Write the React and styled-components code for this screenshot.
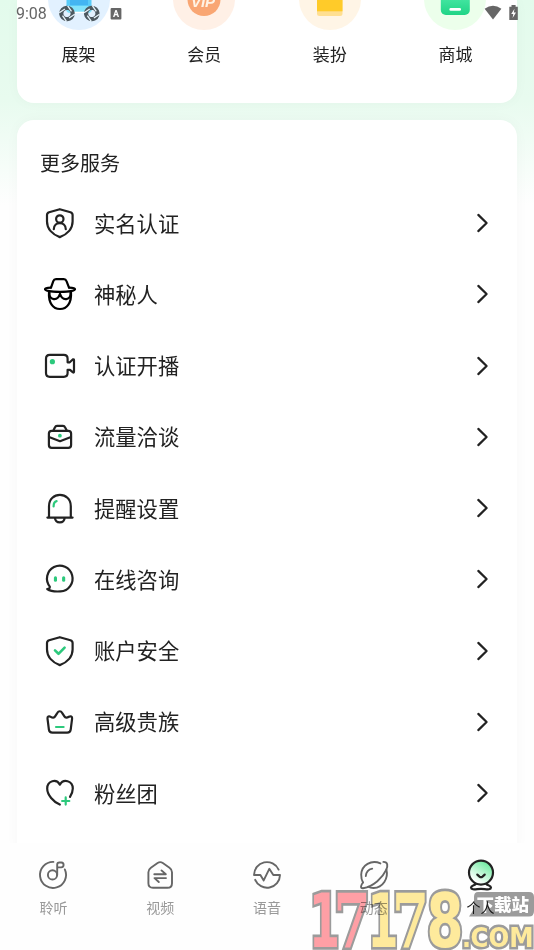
import React from 'react';
import styled, { createGlobalStyle } from 'styled-components';

const GREEN = '#2cc97c';

const GlobalStyle = createGlobalStyle`
	* {
		box-sizing: border-box;
	}

	body {
		margin: 0;
		font-family: 'Noto Sans CJK SC', 'Noto Sans', sans-serif;
		color: #222;
	}
`;

const Page = styled.div`
	position: relative;
	display: flex;
	flex-direction: column;
	width: 534px;
	height: 950px;
	overflow: hidden;
	background: linear-gradient(180deg, #e3fbec 0, #e8fbef 100px, #fefefe 205px);
`;

const StatusBar = styled.header`
	position: absolute;
	top: 0;
	left: 0;
	z-index: 2;
	display: flex;
	align-items: center;
	width: 100%;
	height: 27px;
	padding: 0 16px;
	font: 400 16px/28px Roboto, sans-serif;
	color: #666;
`;

const StatusIcons = styled.svg`
	margin-left: ${({ $gap }) => $gap};
`;

const Card = styled.section`
	flex: none;
	margin: 0 17px;
	background: #fff;
	box-shadow: 0 0 14px rgba(0, 0, 0, 0.03);
`;

const ShortcutCard = styled(Card)`
	display: grid;
	grid-template-columns: repeat(4, 125.6px);
	justify-content: center;
	height: 103px;
	border-radius: 0 0 17px 17px;
`;

const Shortcut = styled.div`
	display: flex;
	flex-direction: column;
	align-items: center;
	margin-top: -32px;
	font-size: 17px;
	line-height: 24px;

	svg {
		margin-bottom: 12px;
	}
`;

const ServiceCard = styled(Card)`
	height: 740px;
	margin-top: 17px;
	padding: 28px 23px 0;
	border-radius: 17px;
`;

const Title = styled.h2`
	margin: 0 0 10.4px;
	font-size: 20px;
	font-weight: 400;
	line-height: 29px;
`;

const ServiceRow = styled.div`
	display: flex;
	align-items: center;
	height: 71.25px;
	padding: 0 5px 0 2px;
`;

const ServiceLabel = styled.span`
	flex: 1;
	margin: -1px 0 0 16px;
	font-size: 21.3px;
	line-height: 30px;
`;

const RowIcon = styled.svg`
	fill: none;
	stroke: #222;
	stroke-width: 2.2;
	stroke-linecap: round;
	stroke-linejoin: round;
`;

const TabBar = styled.nav`
	position: absolute;
	left: 0;
	bottom: 0;
	display: grid;
	grid-template-columns: repeat(5, 1fr);
	width: 100%;
	height: 107px;
	padding-top: 16px;
	background: #fefefe;
`;

const Tab = styled.div`
	display: flex;
	flex-direction: column;
	align-items: center;
	font-size: 14px;
	line-height: 20px;
	color: ${({ $active }) => ($active ? '#222' : '#999')};

	svg {
		margin-bottom: 6px;
		fill: none;
		stroke: ${({ $active }) => ($active ? '#222' : '#666')};
		stroke-width: ${({ $active }) => ($active ? 2.2 : 1.9)};
		stroke-linecap: round;
		stroke-linejoin: round;
	}
`;

const Watermark = styled.svg`
	position: absolute;
	right: 0;
	bottom: 0;
	z-index: 3;
	mix-blend-mode: multiply;
`;

const SHIELD =
	'M17.8 4.2L28.5 7.3Q30.6 8 30.6 10V16.5C30.6 24 25 29.5 17.8 32.1C10.6 29.5 5 24 5 16.5V10Q5 8 7.1 7.3Z';

const services = [
	{
		label: '实名认证',
		icon: (
			<>
				<path d={SHIELD} />
				<circle cx="17.8" cy="14" r="3.7" />
				<path d="M11.8 24.2C12 16 23.6 16 23.8 24.2" />
			</>
		),
	},
	{
		label: '神秘人',
		icon: (
			<g stroke="#000">
				<path d="M9 11.6L11.3 5.2Q12 3.2 14 3.2H21.8Q23.8 3.2 24.5 5.2L27 11.6" />
				<path d="M9 11.6C5.5 11.6 3 12 3 13.2C3 14.8 9 15.8 18 15.8S33 14.8 33 13.2C33 12 30.5 11.6 27 11.6" />
				<path d="M7 16C6.3 27 11 33 18 33S29.7 27 29 16" />
				<path d="M7.4 16.4C7 24.6 15.6 25.6 18 17.8C20.4 25.6 29 24.6 28.6 16.4" />
			</g>
		),
	},
	{
		label: '认证开播',
		icon: (
			<>
				<path d="M7.8 6.9H21.8Q25.6 6.9 25.6 10.7V14.3H27.8L31 11.3Q32 11 32 12.2V23.6Q32 25 31 24.4L28 21.8H25.6V25Q25.6 28.8 21.8 28.8H7.8Q4 28.8 4 25V10.7Q4 6.9 7.8 6.9Z" />
				<circle cx="10.4" cy="13.7" r="2.6" fill={GREEN} stroke="none" />
			</>
		),
	},
	{
		label: '流量洽谈',
		icon: (
			<>
				<rect x="6.9" y="11.8" width="22.2" height="17" rx="2.8" />
				<path d="M11.4 11.5L13 8.2Q13.6 6.8 15 6.8H21Q22.4 6.8 23 8.2L24.8 11.5M7 18L18 22.2L29 18" />
				<circle cx="17.9" cy="16.7" r="1.9" fill={GREEN} stroke="none" />
			</>
		),
	},
	{
		label: '提醒设置',
		icon: (
			<>
				<path d="M5.4 27.6H30.6M7 27.4V16.2C7 1.2 28.8 1.2 28.8 16.2V27.4M12.9 27.8C13.5 33.8 22.1 33.8 22.7 27.8" />
				<path d="M11.6 16.4Q11.6 11.8 14.6 11.2" stroke={GREEN} />
			</>
		),
	},
	{
		label: '在线咨询',
		icon: (
			<>
				<path d="M7.8 25.6A12.8 12.9 0 1 1 18.5 30.4C13 30.8 8 30 5.2 28C7 27.9 8 27.2 7.8 25.6Z" />
				<g fill={GREEN} stroke="none">
					<rect x="11.9" y="15.3" width="3.1" height="5.4" rx="1.5" />
					<rect x="20.1" y="15.3" width="3.1" height="5.4" rx="1.5" />
				</g>
			</>
		),
	},
	{
		label: '账户安全',
		icon: (
			<>
				<path d={SHIELD} />
				<path d="M13 17.4L16.5 20.8L22.6 14.6" stroke={GREEN} strokeWidth="2.6" />
			</>
		),
	},
	{
		label: '高级贵族',
		icon: (
			<>
				<path d="M5.5 14.6C5.2 12.5 7 11.7 8.7 12.8C10.5 14 12.2 14 13.1 12.4L15.4 8.8C16.6 6.7 18.9 6.7 20.1 8.8L22.4 12.4C23.3 14 25 14 26.9 12.8C28.6 11.7 30.4 12.5 30.1 14.6L28.7 25.6Q28.3 28.7 25.2 28.7H10.4Q7.3 28.7 6.9 25.6Z" />
				<path d="M14 23H21.6" stroke={GREEN} />
			</>
		),
	},
	{
		label: '粉丝团',
		icon: (
			<>
				<path d="M17.8 29.6C11.5 27 5.2 20 5.2 13.6C5.2 5.4 14.5 3.4 17.9 9.6C21.3 3.4 30.8 5.4 30.8 13.6C30.8 16.6 29.6 19.4 28 21.8" />
				<path d="M20.1 26H27.3M23.7 22.4V29.6" stroke={GREEN} />
			</>
		),
	},
];

const shortcuts = [
	{
		label: '展架',
		tint: '#e2f1ff',
		icon: (
			<>
				<rect x="18.5" y="10" width="25" height="34.5" rx="3" fill="#59cbf8" />
				<rect x="22" y="10" width="18" height="27" fill="#43b5f2" />
				<rect x="18.5" y="38" width="25" height="6.5" rx="2" fill="#83e3fb" />
				<path d="M26 44.4H37" stroke="#fff" strokeWidth="1.4" />
			</>
		),
	},
	{
		label: '会员',
		tint: '#fff0e6',
		icon: (
			<>
				<circle cx="31" cy="31.5" r="16.5" fill="#f9a673" />
				<text
					x="30"
					y="38.5"
					fill="#fff3e4"
					fontFamily="Liberation Sans, sans-serif"
					fontSize="15"
					fontWeight="700"
					fontStyle="italic"
					textAnchor="middle"
				>
					VIP
				</text>
			</>
		),
	},
	{
		label: '装扮',
		tint: '#fff5e6',
		icon: (
			<>
				<rect x="18" y="14" width="25.5" height="34" rx="2.5" fill="#ffdf92" />
				<rect x="18" y="14" width="25.5" height="29.3" fill="#ffcb29" />
			</>
		),
	},
	{
		label: '商城',
		tint: '#ecffeb',
		icon: (
			<>
				<defs>
					<linearGradient id="mall" x1="0" y1="0" x2="0" y2="1">
						<stop offset="0.5" stopColor="#42e5a0" />
						<stop offset="1" stopColor="#20d486" />
					</linearGradient>
				</defs>
				<rect x="16.8" y="15" width="29" height="32" rx="5" fill="url(#mall)" />
				<rect x="25.4" y="40" width="11.6" height="2.8" rx="1.3" fill="#fff" />
			</>
		),
	},
];

const tabs = [
	{
		label: '聆听',
		icon: (
			<>
				<path d="M16.4 2.9A13 13 0 1 0 27.8 10.4" />
				<circle cx="15.5" cy="15.9" r="4.6" />
				<path d="M20.2 16V5.6Q20.2 3.5 22.4 3.5H24.4Q26.6 3.7 26.6 6Q26.4 8.3 24.2 8.4H20.4" />
			</>
		),
	},
	{
		label: '视频',
		icon: (
			<>
				<path d="M13.6 4Q16.2 2.3 18.8 4L25.5 8.7Q28 10.4 28 13.2V24.2Q28 28.8 23.4 28.8H9Q4.4 28.8 4.4 24.2V13.2Q4.4 10.4 6.9 8.7Z" />
				<path d="M10.3 15.3H21.8L17.5 11.4M22 19.1H10.5L14.8 23" />
			</>
		),
	},
	{
		label: '语音',
		icon: (
			<>
				<path d="M27.6 10.6A12.9 12.9 0 0 0 3 16H9.4L12.7 21.4L18.3 9.8L22.3 16H29A12.9 12.9 0 0 1 4.2 20.8" />
			</>
		),
	},
	{
		label: '动态',
		icon: (
			<>
				<path d="M22.4 4.4C13.4 .4 3.6 6 3.2 15.6C3.1 18.8 3.9 21.5 5 23.5" />
				<path d="M25.4 2.9C30 2.8 30 7 28.2 10.8C24.5 18.6 16 27.2 5 29.2C1.8 29.4 3 26 5 23.5" />
				<path d="M28.4 10.5C30.6 19.5 25 28.6 15.5 29Q12.3 29 10.2 27.7" />
				<path d="M7.8 17Q8.4 10.8 14.2 9.6" />
			</>
		),
	},
	{
		label: '个人',
		active: true,
		icon: (
			<>
				<defs>
					<linearGradient id="me" x1="0.8" y1="0" x2="0.25" y2="0.85">
						<stop offset="0" stopColor="#62ea98" />
						<stop offset="1" stopColor="#fff" />
					</linearGradient>
				</defs>
				<path d="M10.5 24C12 26.4 6 26 6 28.4C6.2 31.6 11.5 29.9 16 29.9S25.800 31.6 26 28.4C26 26 20 26.4 21.5 24" />
				<circle cx="16" cy="13.6" r="12" fill="url(#me)" />
				<path d="M12.3 15.6L14.5 17.6Q16 18.8 17.5 17.6L19.7 15.6" />
			</>
		),
	},
];

const SANS = 'DejaVu Sans, sans-serif';
const SERIF = 'DejaVu Serif, serif';

const digits = [
	{ char: '1', x: 309, color: '#ffa0a6', width: 31, font: SANS },
	{ char: '7', x: 333.5, color: '#ffa0a6', width: 37, font: SERIF },
	{ char: '1', x: 367.5, color: '#ffeb9d', width: 31, font: SANS },
	{ char: '7', x: 392, color: '#ffeb9d', width: 37, font: SERIF },
	{ char: '8', x: 426.5, color: '#ffeb9d', width: 37, font: SANS },
];

function Aperture({ cx }) {
	return (
		<g transform={`translate(${cx} 13.5) rotate(20)`}>
			<circle r="5.7" fill="none" stroke="#4d5960" strokeWidth="4.2" />
			<path
				d="M-2 -7.5L3.5 -3.5M7.5 -2L3.5 3.5M2 7.5L-3.5 3.5M-7.5 2L-3.5 -3.5"
				stroke="#e8f4fb"
				strokeWidth="1.3"
			/>
		</g>
	);
}

function Status() {
	return (
		<StatusBar>
			<span>9:08</span>
			<StatusIcons $gap="11px" width="66" height="27">
				<Aperture cx={9} />
				<Aperture cx={33.8} />
				<rect x="52.6" y="8" width="10.8" height="11.5" rx="1" fill="#666" />
				<text x="58" y="17" fill="#fff" fontSize="9" fontWeight="700" textAnchor="middle">
					A
				</text>
			</StatusIcons>
			<StatusIcons $gap="auto" width="36" height="27" overflow="visible">
				<path d="M2.6 8.8Q11 2.8 19.4 8.8L11 19.4Z" fill="#666" />
				<path d="M27.3 6.7H29.5V5H33.6V6.7H35.8V20H27.3Z" fill="#666" />
				<path d="M32.5 8.8L29.2 14H31.3L30.6 18L34 12.6H31.8Z" fill="#fff" />
			</StatusIcons>
		</StatusBar>
	);
}

function SiteMark() {
	return (
		<Watermark width="234" height="66" viewBox="300 884 234 66">
			<g fontWeight="700" stroke="#9c9c9c" strokeLinejoin="miter" paintOrder="stroke">
				{digits.map(({ char, x, color, width, font }, index) => (
					<text
						key={`${index}-digit`}
						x={x}
						y="947"
						fontFamily={font}
						fontSize="74"
						textLength={width}
						lengthAdjust="spacingAndGlyphs"
						fill={color}
						strokeWidth="5.5"
					>
						{char}
					</text>
				))}
				<g fontFamily={SANS} fontSize="27" fill="#ffeb9d" strokeWidth="5">
					<text x="462" y="947" textLength="9" lengthAdjust="spacingAndGlyphs">
						.
					</text>
					<text x="470.5" y="947" textLength="63" lengthAdjust="spacingAndGlyphs">
						COM
					</text>
				</g>
			</g>
			<path d="M478 892H529Q534 892 534 897V911Q534 916.5 529 916.5H469L474 909V897Q474 892 478 892Z" fill="#9c9c9c" />
			<text
				x="476.5"
				y="911"
				fill="#fff"
				fontFamily="Noto Sans CJK SC, sans-serif"
				fontSize="17.5"
				fontWeight="900"
			>
				下载站
			</text>
		</Watermark>
	);
}

export default function App() {
	return (
		<Page>
			<GlobalStyle />
			<Status />
			<ShortcutCard>
				{shortcuts.map(({ label, tint, icon }) => (
					<Shortcut key={label}>
						<svg width="62" height="62">
							<circle cx="31" cy="31" r="31" fill={tint} />
							{icon}
						</svg>
						{label}
					</Shortcut>
				))}
			</ShortcutCard>
			<ServiceCard>
				<Title>更多服务</Title>
				{services.map(({ label, icon }) => (
					<ServiceRow key={label}>
						<RowIcon width="36" height="36">
							{icon}
						</RowIcon>
						<ServiceLabel>{label}</ServiceLabel>
						<RowIcon width="13" height="20">
							<path d="M2.3 1.9L10.6 10L2.3 18.1" />
						</RowIcon>
					</ServiceRow>
				))}
			</ServiceCard>
			<TabBar>
				{tabs.map(({ label, icon, active }) => (
					<Tab key={label} $active={active}>
						<svg width="32" height="32">
							{icon}
						</svg>
						{label}
					</Tab>
				))}
			</TabBar>
			<SiteMark />
		</Page>
	);
}
